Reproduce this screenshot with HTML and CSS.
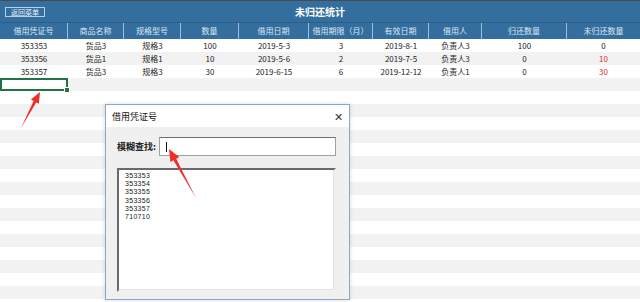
FILE: index.html
```html
<!DOCTYPE html>
<html lang="zh-CN">
<head>
  <meta charset="UTF-8" />
  <title>未归还统计</title>
  <link rel="stylesheet" href="styles.css">
</head>
<body>
  <div class="sheet">
    <div class="titlebar">
      <button class="voltar">返回菜单</button>
      <div class="titulo">未归还统计</div>
      <div></div>
    </div>

    <div class="linha cabecalho">
      <div>借用凭证号</div><div>商品名称</div><div>规格型号</div><div>数量</div><div>借用日期</div>
      <div>借用期限（月）</div><div>有效日期</div><div>借用人</div><div>归还数量</div><div>未归还数量</div>
    </div>
    <div class="linha">
      <div>353353</div><div>货品3</div><div>规格3</div><div>100</div><div>2019-5-3</div>
      <div>3</div><div>2019-8-1</div><div>负责人3</div><div>100</div><div>0</div>
    </div>
    <div class="linha par">
      <div>353356</div><div>货品1</div><div>规格1</div><div>10</div><div>2019-5-6</div>
      <div>2</div><div>2019-7-5</div><div>负责人3</div><div>0</div><div class="vermelho">10</div>
    </div>
    <div class="linha">
      <div>353357</div><div>货品3</div><div>规格3</div><div>30</div><div>2019-6-15</div>
      <div>6</div><div>2019-12-12</div><div>负责人1</div><div>0</div><div class="vermelho">30</div>
    </div>

    <div class="listras">
      <div class="celula-ativa"></div>
    </div>
  </div>

  <!-- janela de busca por cima da planilha -->
  <div class="janela">
    <div class="janela-topo">
      <span>借用凭证号</span>
      <span class="fechar">✕</span>
    </div>
    <div class="janela-corpo">
      <div class="busca">
        <label>模糊查找:</label>
        <div class="campo"><span class="cursor"></span></div>
      </div>
      <div class="lista">
        <div>353353</div>
        <div>353354</div>
        <div>353355</div>
        <div>353356</div>
        <div>353357</div>
        <div>710710</div>
      </div>
    </div>
  </div>

  <svg class="setas" width="640" height="302" viewBox="0 0 640 302">
    <polygon points="21,128 33.6,101 30.9,99.6 40,92 38.9,103.8 36.2,102.4" />
    <polygon points="196,198 173.4,160.3 170.4,161.9 169,149 179.2,157.1 176.2,158.7" />
  </svg>
</body>
</html>
```

FILE: styles.css
```css
:root {
  --azul: #336e9e;
  --azul-linha: #9dbdd8;
  --cinza: #f2f2f2;
  --texto: #222;
  --vermelho: #e32b2b;
  --seta: #ec2f2a;
}

body {
  margin: 0;
  width: 640px;
  height: 302px;
  overflow: hidden;
  position: relative;
  font-family: "Noto Sans CJK SC", sans-serif;
  font-size: 8px;
  color: var(--texto);
  background: #fff;
}

.sheet {
  display: flex;
  flex-direction: column;
  height: 302px;
  border-top: 1px solid #4a4a4a;
  box-sizing: border-box;
}

.titlebar {
  background: var(--azul);
  height: 21px;
  display: grid;
  grid-template-columns: 1fr auto 1fr;
  align-items: center;
  border-bottom: 1px solid #2a5f8a;
}

.voltar {
  justify-self: start;
  margin-left: 5px;
  height: 10px;
  width: 40px;
  padding: 0;
  background: transparent;
  border: 1px solid #b9d0e4;
  color: #e8f0f7;
  font-family: "Noto Sans CJK SC", sans-serif;
  font-size: 7px;
  line-height: 8px;
}

.titulo {
  color: #fff;
  font-weight: bold;
  font-size: 10px;
}

.linha {
  display: grid;
  grid-template-columns: 68px 56px 57px 58px 70px 64px 56px 53px 85px 73px;
  height: 13px;
  line-height: 13px;
  text-align: center;
}

.linha.par {
  background: var(--cinza);
}

.cabecalho {
  height: 16px;
  line-height: 16px;
  background: var(--azul);
  color: #dce8f2;
}

.cabecalho div {
  border-right: 1px solid var(--azul-linha);
  white-space: nowrap;
}

.cabecalho div:last-child {
  border-right: none;
}

.vermelho {
  color: var(--vermelho);
}

.listras {
  flex: 1;
  background: repeating-linear-gradient(var(--cinza) 0 13px, #fff 13px 26px);
}

.celula-ativa {
  position: relative;
  width: 68px;
  height: 13px;
  box-sizing: border-box;
  border: 2px solid #217346;
  background: #fff;
}

.celula-ativa::after {
  content: "";
  position: absolute;
  right: -4px;
  bottom: -4px;
  width: 4px;
  height: 4px;
  background: #217346;
  border: 1px solid #fff;
}

/* janela do formulário */
.janela {
  position: absolute;
  left: 105px;
  top: 104px;
  width: 245px;
  height: 196px;
  box-sizing: border-box;
  border: 1px solid #86a9cc;
  background: #f0f0f0;
  box-shadow: 0 0 4px rgba(0, 0, 0, 0.15);
  display: flex;
  flex-direction: column;
}

.janela-topo {
  height: 22px;
  background: #fff;
  display: flex;
  align-items: center;
  justify-content: space-between;
  padding: 0 6px 0 6px;
  font-size: 9px;
  color: #111;
}

.fechar {
  font-size: 11px;
  color: #333;
}

.janela-corpo {
  flex: 1;
  padding: 10px 13px 7px 11px;
  display: flex;
  flex-direction: column;
  gap: 12px;
}

.busca {
  display: flex;
  align-items: center;
  gap: 2px;
}

.busca label {
  font-size: 9px;
  font-weight: bold;
  color: #222;
  width: 40px;
}

.campo {
  flex: 1;
  height: 19px;
  box-sizing: border-box;
  background: #fff;
  border: 1px solid #a0a0a0;
  border-top-color: #6e6e6e;
  display: flex;
  align-items: center;
  padding-left: 6px;
}

.cursor {
  width: 1px;
  height: 10px;
  background: #111;
}

.lista {
  flex: 1;
  background: #fff;
  border: 2px solid #f0f0f0;
  border-top-color: #6a6a6a;
  border-left-color: #6a6a6a;
  box-shadow: inset -1px -1px 0 #e3e3e3;
  padding: 2px 6px;
  font-family: "Liberation Sans", Arial, sans-serif;
  font-size: 7px;
  letter-spacing: 0.3px;
  line-height: 8.2px;
  color: #222;
}

.setas {
  position: absolute;
  left: 0;
  top: 0;
  pointer-events: none;
}

.setas polygon {
  fill: var(--seta);
}
```
